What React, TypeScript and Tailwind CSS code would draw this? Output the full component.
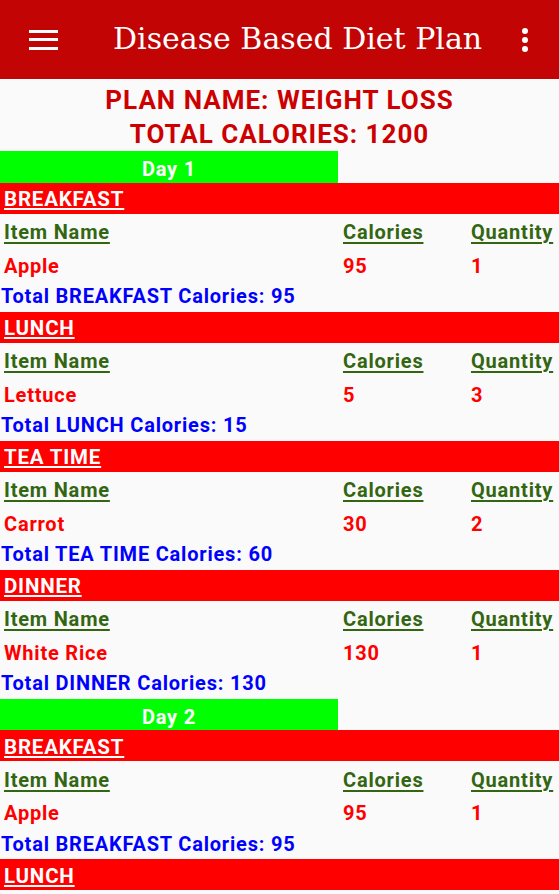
import { Fragment } from "react";

type Meal = {
    name: string;
    item: string;
    calories: number;
    quantity: number;
};

// last LUNCH is cut off by the bottom of the screen, only its bar shows
const days: { label: string; meals: Meal[] }[] = [
    {
        label: "Day 1",
        meals: [
            { name: "BREAKFAST", item: "Apple", calories: 95, quantity: 1 },
            { name: "LUNCH", item: "Lettuce", calories: 5, quantity: 3 },
            { name: "TEA TIME", item: "Carrot", calories: 30, quantity: 2 },
            { name: "DINNER", item: "White Rice", calories: 130, quantity: 1 },
        ],
    },
    {
        label: "Day 2",
        meals: [
            { name: "BREAKFAST", item: "Apple", calories: 95, quantity: 1 },
            { name: "LUNCH", item: "Lettuce", calories: 5, quantity: 3 },
        ],
    },
];

function MealBlock({ meal, barOnly }: { meal: Meal; barOnly?: boolean }) {
    return (
        <div>
            <div className="h-[31px] bg-[#ff0000] flex items-center pl-[4px] pt-[3px]">
                <span className="text-white text-[20.5px] underline underline-offset-[2px] decoration-[2px]">
                    {meal.name}
                </span>
            </div>
            {!barOnly && (
                <>
                    <div className="h-[37px] flex items-center text-[#336611]">
                        <span className="w-[343px] pl-[4px]">
                            <span className="underline underline-offset-[3px] decoration-[2px]">Item Name</span>
                        </span>
                        <span className="w-[128px]">
                            <span className="underline underline-offset-[3px] decoration-[2px]">Calories</span>
                        </span>
                        <span className="underline underline-offset-[3px] decoration-[2px]">Quantity</span>
                    </div>
                    <div className="h-[30px] flex items-center text-[#ff0000]">
                        <span className="w-[343px] pl-[4px]">{meal.item}</span>
                        <span className="w-[128px]">{meal.calories}</span>
                        <span>{meal.quantity}</span>
                    </div>
                    <div className="h-[31px] flex items-center pl-[1px] text-[#0000ff]">
                        Total {meal.name} Calories: {meal.calories * meal.quantity}
                    </div>
                </>
            )}
        </div>
    );
}

export default function App() {
    return (
        <div className="w-[559px] h-[894px] overflow-hidden bg-[#fafafa] font-['Roboto',sans-serif] font-bold text-[20px] tracking-[0.8px] leading-none">
            <div className="h-[79px] bg-[#c20404] flex items-center text-white tracking-normal">
                <div className="ml-[29px] w-[29px] flex flex-col gap-[5.5px]">
                    <div className="h-[3px] bg-white" />
                    <div className="h-[3px] bg-white" />
                    <div className="h-[3px] bg-white" />
                </div>
                <div className="ml-[55px] font-['DejaVu_Serif',serif] font-normal text-[30px] pb-[2px]">
                    Disease Based Diet Plan
                </div>
                <div className="ml-auto mr-[31px] flex flex-col gap-[3px]">
                    <div className="w-[6px] h-[6px] rounded-full bg-white" />
                    <div className="w-[6px] h-[6px] rounded-full bg-white" />
                    <div className="w-[6px] h-[6px] rounded-full bg-white" />
                </div>
            </div>
            <div className="h-[72px] flex flex-col items-center justify-center pt-[4px] text-[#cc0000] text-[26px] tracking-[1px] leading-[34px]">
                <div>PLAN NAME: WEIGHT LOSS</div>
                <div>TOTAL CALORIES: 1200</div>
            </div>
            {days.map((day, d) => (
                <Fragment key={day.label}>
                    <div className="w-[338px] h-[31.5px] bg-[#00ff00] flex items-center justify-center text-white pt-[5px]">
                        {day.label}
                    </div>
                    {day.meals.map((m, i) => (
                        <MealBlock
                            key={i}
                            meal={m}
                            barOnly={d === days.length - 1 && i === day.meals.length - 1}
                        />
                    ))}
                </Fragment>
            ))}
        </div>
    );
}
